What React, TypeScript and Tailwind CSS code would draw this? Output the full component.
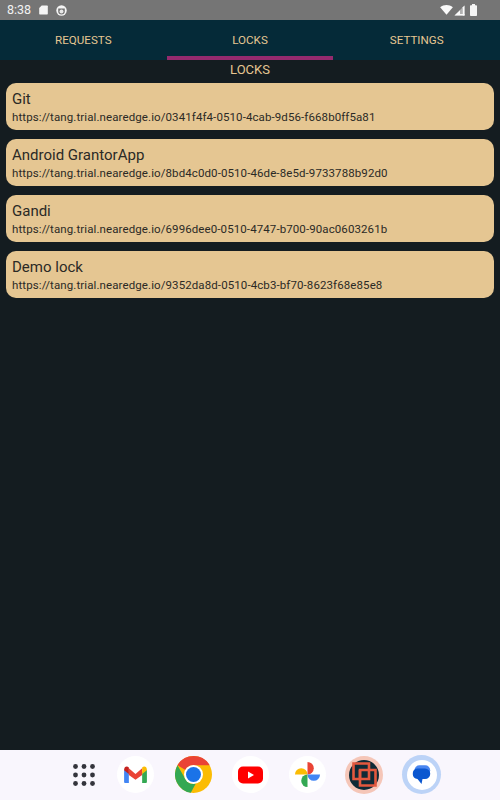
import React from "react";

const LOCKS = [
  { name: "Git", url: "https://tang.trial.nearedge.io/0341f4f4-0510-4cab-9d56-f668b0ff5a81" },
  { name: "Android GrantorApp", url: "https://tang.trial.nearedge.io/8bd4c0d0-0510-46de-8e5d-9733788b92d0" },
  { name: "Gandi", url: "https://tang.trial.nearedge.io/6996dee0-0510-4747-b700-90ac0603261b" },
  { name: "Demo lock", url: "https://tang.trial.nearedge.io/9352da8d-0510-4cb3-bf70-8623f68e85e8" },
];

function StatusBar() {
  return (
    <div className="flex h-5 items-center justify-between bg-[#757575] pl-[7px] pr-[23px] text-white">
      <div className="flex items-center">
        <span className="w-[22px] text-[12.5px] leading-none text-[#f2f2f2]">8:38</span>
        <svg className="ml-[10px]" width="9" height="10" viewBox="0 0 10 11">
          <path d="M3 0.5H9a0.8 0.8 0 0 1 .8.8V9.7a.8.8 0 0 1-.8.8H1a.8.8 0 0 1-.8-.8V3.3Z" fill="#f5f5f5" />
        </svg>
        <svg className="ml-[8px]" width="11" height="11" viewBox="0 0 11 11">
          <circle cx="5.5" cy="5.5" r="5.2" fill="#f5f5f5" />
          <path d="M2.2 3.5h6.6v3a3.3 3 0 0 1-6.6 0Z" fill="#757575" />
          <circle cx="5.5" cy="6.4" r="2" fill="#e8e8e8" />
        </svg>
      </div>
      <div className="flex items-center">
        <svg width="13" height="10" viewBox="0 0 14 11">
          <path d="M0 2.6C4-.8 10-.8 14 2.6L7 10.6Z" fill="#fafafa" />
        </svg>
        <svg className="ml-[1px]" width="11" height="11" viewBox="0 0 11 11">
          <path d="M10.5 0.5V10.5H0.5Z" fill="#fafafa" fillOpacity="0.45" />
          <path d="M6 5.2V10.5H0.5Z" fill="#fafafa" />
          <path d="M10.5 0.5V10.5H8.8V2.3Z" fill="#fafafa" />
          <path d="M6 10.5H10.5V9H6Z" fill="#fafafa" />
        </svg>
        <svg className="ml-[5px]" width="7" height="12" viewBox="0 0 7 12">
          <path d="M2 0h3v1.2h1.2a.8.8 0 0 1 .8.8v9.2a.8.8 0 0 1-.8.8H.8a.8.8 0 0 1-.8-.8V2a.8.8 0 0 1 .8-.8H2Z" fill="#f5f5f5" />
        </svg>
      </div>
    </div>
  );
}

function Tabs() {
  const tabs = ["REQUESTS", "LOCKS", "SETTINGS"];
  return (
    <div className="grid h-10 grid-cols-3 bg-[#052a38]">
      {tabs.map((tab, i) => (
        <div key={tab} className="relative flex items-center justify-center pt-[1px] text-[11.6px] leading-none text-[#e5c692]">
          {tab}
          {i === 1 && <div className="absolute bottom-0 left-0 right-0 h-1 bg-[#942a6e]" />}
        </div>
      ))}
    </div>
  );
}

function LockCard({ name, url }: { name: string; url: string }) {
  return (
    <div className="flex h-[47px] flex-col rounded-[10px] bg-[#e5c692] pl-[6px] text-[#2b2a26]">
      <div className="mt-[8px] text-[15px] leading-[17px]">{name}</div>
      <div className="mt-[2px] text-[11.5px] leading-[14px] tracking-[0.1px]">{url}</div>
    </div>
  );
}

function Dock() {
  return (
    <div className="flex h-[50px] items-center bg-[#f9f6fd] pb-[1px] pl-[73px]">
      {/* app launcher */}
      <svg width="22" height="22" viewBox="0 0 22 22" className="mr-[22px]">
        {[2.5, 11, 19.5].map((y) =>
          [2.5, 11, 19.5].map((x) => <circle key={`${x}-${y}`} cx={x} cy={y} r="2.4" fill="#34343c" />)
        )}
      </svg>
      {/* gmail */}
      <div className="flex h-[37px] w-[37px] items-center justify-center rounded-full bg-white">
        <svg width="25" height="19" viewBox="0 0 26 20">
          <path d="M1 5v13a1 1 0 0 0 1 1h4V8Z" fill="#4285f4" />
          <path d="M25 5v13a1 1 0 0 1-1 1h-4V8Z" fill="#34a853" />
          <path d="M6 3.5 13 9.5 20 3.5V10.5L13 15.5 6 10.5Z" fill="#ea4335" />
          <path d="M1 5C1 1.5 4 0.5 6 2.5V9.5L1 5.5Z" fill="#c5221f" />
          <path d="M25 5C25 1.5 22 0.5 20 2.5V9.5L25 5.5Z" fill="#fbbc04" />
        </svg>
      </div>
      {/* chrome */}
      <div className="ml-[21px]">
        <svg width="37" height="37" viewBox="0 0 48 48" className="block">
          <circle cx="24" cy="24" r="24" fill="#fbbc04" />
          <path d="M24 0A24 24 0 0 1 45 12H24A12 12 0 0 0 13.6 18L3.2 12A24 24 0 0 1 24 0Z" fill="#ea4335" />
          <path d="M3.2 12 13.6 30A12 12 0 0 0 27 35.6L20.5 47.8A24 24 0 0 1 3.2 12Z" fill="#34a853" />
          <circle cx="24" cy="24" r="12.3" fill="#fff" />
          <circle cx="24" cy="24" r="9.7" fill="#1a73e8" />
        </svg>
      </div>
      {/* youtube */}
      <div className="ml-[20px] flex h-[37px] w-[37px] items-center justify-center rounded-full bg-white">
        <svg width="25" height="18" viewBox="0 0 25 18">
          <rect x="0" y="0.5" width="25" height="17" rx="5" fill="#f00" />
          <path d="M10 5.5V12.5L16 9Z" fill="#fff" />
        </svg>
      </div>
      {/* photos */}
      <div className="ml-[20px] flex h-[37px] w-[37px] items-center justify-center rounded-full bg-white">
        <svg width="27" height="27" viewBox="0 0 28 28">
          <path d="M1 14A6.5 6.5 0 0 1 14 14Z" fill="#fbbc04" />
          <path d="M14 1A6.5 6.5 0 0 1 14 14Z" fill="#ea4335" />
          <path d="M27 14A6.5 6.5 0 0 1 14 14Z" fill="#4285f4" />
          <path d="M14 27A6.5 6.5 0 0 1 14 14Z" fill="#34a853" />
        </svg>
      </div>
      {/* grantor app */}
      <div className="ml-[19px] flex h-[38px] w-[38px] items-center justify-center rounded-full bg-[#f5c6b8]">
        <div className="flex h-[30px] w-[30px] items-center justify-center rounded-full bg-[#0e2a36]">
          <svg width="25" height="25" viewBox="0 0 25 25" fill="none" stroke="#e2583e" strokeWidth="2.6">
            <path d="M17 8V1.5H1.5V17H8" />
            <path d="M8 8H17V17H8Z" />
            <path d="M8 8V23.5H23.5V8H17" />
          </svg>
        </div>
      </div>
      {/* messages */}
      <div className="ml-[19px] flex h-[39px] w-[39px] items-center justify-center rounded-full bg-[#bcd3f7]">
        <div className="flex h-[30px] w-[30px] items-center justify-center rounded-full bg-white">
          <svg width="21" height="21" viewBox="0 0 21 21">
            <rect x="3.5" y="1.2" width="15.7" height="10" rx="5" fill="#4a86f0" />
            <path d="M6.2 4.5H14A5.2 5.2 0 0 1 14 15H11.5L10.5 20 6.5 15A5.3 5.3 0 0 1 6.2 4.5Z" fill="#0b57d0" />
          </svg>
        </div>
      </div>
    </div>
  );
}

export default function App() {
  return (
    <div className="flex h-[800px] w-[500px] flex-col overflow-hidden bg-[#141c20] font-['Roboto',sans-serif]">
      <StatusBar />
      <Tabs />
      <div className="flex-1">
        <div className="h-[23px] text-center text-[13px] leading-[20px] text-[#e5c692]">LOCKS</div>
        <div className="flex flex-col gap-[9px] px-[6px]">
          {LOCKS.map((lock) => (
            <LockCard key={lock.name} name={lock.name} url={lock.url} />
          ))}
        </div>
      </div>
      <Dock />
    </div>
  );
}
